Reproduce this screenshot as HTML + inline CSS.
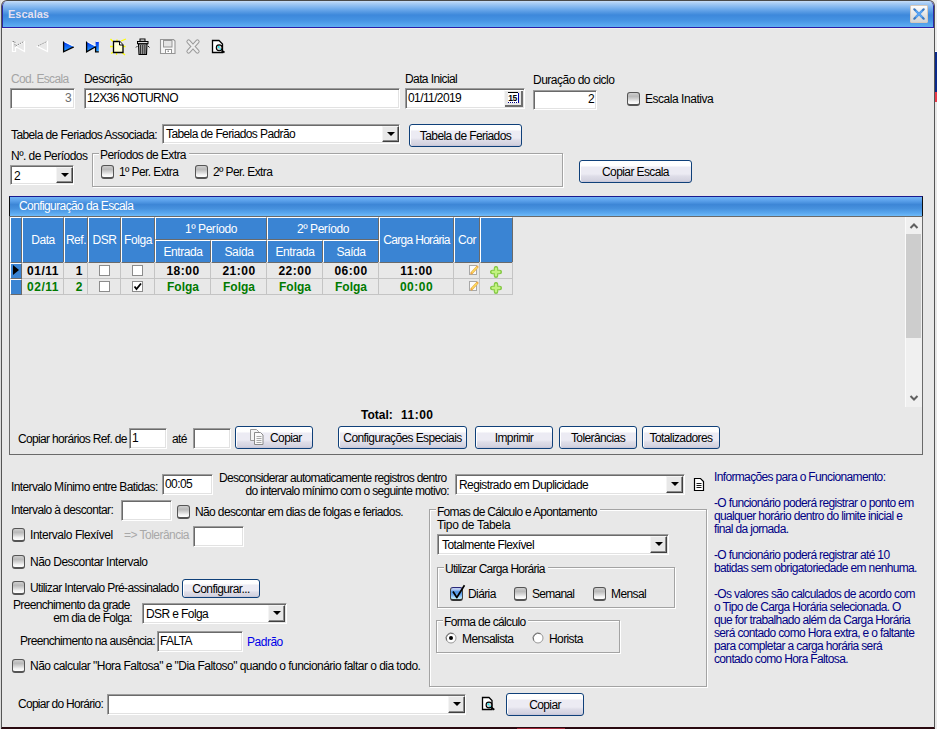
<!DOCTYPE html>
<html><head><meta charset="utf-8">
<style>
*{box-sizing:border-box}
html,body{margin:0;padding:0;width:937px;height:729px;overflow:hidden;background:#e8e8e8;position:relative}
body{font-family:"Liberation Sans",sans-serif;font-size:11px}
.a{position:absolute}
.t{position:absolute;font:12px/13px "Liberation Sans",sans-serif;white-space:nowrap;color:#000;letter-spacing:-0.6px}
.b{font-weight:bold}
.inp{position:absolute;background:#fff;border:1px solid;border-color:#9c9c9c #fff #fff #9c9c9c;box-shadow:inset 1px 1px 0 #6a6a6a,inset -1px -1px 0 #e2e2e2}
.btn{position:absolute;padding-top:1px;border:1px solid #0f4079;border-radius:3px;background:linear-gradient(#ffffff 0,#fefefe 22%,#ecebf3 30%,#ecebf3 62%,#dedde8 72%,#d4d3e0 92%,#c3c2d6 100%);box-shadow:inset 1px 0 0 #fff;font:12px/21px "Liberation Sans",sans-serif;text-align:center;color:#000;letter-spacing:-0.6px;white-space:nowrap}
.chk{position:absolute;width:13px;height:14px;border:1px solid #555;border-bottom-width:2px;border-radius:3px;background:linear-gradient(#cfcfcf 0,#b9b9b9 30%,#d4d4d4 55%,#f2f2f2 78%,#fff 100%)}
.gb{position:absolute;border:1px solid #a3a3a3;box-shadow:1px 1px 0 #fff,inset 1px 1px 0 #fff}
.cbtn{position:absolute;background:#e8e8e8;border:1px solid;border-color:#f4f4f4 #404040 #404040 #f4f4f4;box-shadow:inset -1px -1px 0 #8a8a8a}
.cbtn:after{content:"";position:absolute;left:4px;top:5px;border-left:4px solid transparent;border-right:4px solid transparent;border-top:4px solid #000}
.hc{position:absolute;background:#3a84d3;border-left:1px solid #fff;border-top:1px solid #fff;border-right:1px solid #6a6a6a;border-bottom:1px solid #6a6a6a}
.ht{color:#fff;text-align:center;letter-spacing:-0.45px}
.gck{width:11px;height:11px;background:#fff;border:1px solid #8c8c8c}
.gd{font-size:12px;letter-spacing:0.5px}
</style></head><body>
<!-- outer window frame -->
<div class="a" style="left:0;top:0;width:1px;height:729px;background:#dcdcdc"></div>
<div class="a" style="left:935px;top:0;width:2px;height:51px;background:#ececec"></div>
<div class="a" style="left:935px;top:51px;width:2px;height:1px;background:#fff"></div>
<div class="a" style="left:935px;top:52px;width:2px;height:40px;background:#0a2a8a"></div>
<div class="a" style="left:935px;top:92px;width:2px;height:10px;background:#e83a4a"></div>
<div class="a" style="left:935px;top:102px;width:2px;height:627px;background:#e8e8e8"></div>

<div class="a" style="left:1px;top:0;width:934px;height:729px;border:1px solid #555;border-top-color:#4a4a4a;border-bottom:2px solid #2a0a10;border-radius:6px 6px 0 0;background:#e8e8e8;overflow:hidden">
  <div class="a" style="left:0;top:0;width:932px;height:27px;background:linear-gradient(#c8def8 0,#a9cdf5 8%,#6eaaeb 30%,#3d88db 52%,#4592e2 70%,#58a8ef 90%,#64b2f4 100%);border-left:1px solid #2a2aa8;border-right:1px solid #2a2aa8;border-radius:5px 5px 0 0"></div>
  <div class="a" style="left:0;top:26px;width:932px;height:1px;background:#2a1ea8"></div>
  <div class="a" style="left:0;top:27px;width:932px;height:1px;background:#f2f2ec"></div>
</div>
<div class="t b" style="left:8px;top:8px;color:#e4e0f0;letter-spacing:0;font-size:11px">Escalas</div>
<!-- close button -->
<div class="a" style="left:910px;top:5px;width:18px;height:18px;border:1px solid #d6c9bc;border-radius:1px;background:linear-gradient(#fdfdfd,#e2e2e2 60%,#d4d4d4)"></div>
<svg class="a" style="left:910px;top:5px" width="18" height="18" viewBox="0 0 18 18"><path d="M4.3 4.3L13.7 13.7M13.7 4.3L4.3 13.7" stroke="#3a78c0" stroke-width="2.2" stroke-linecap="round"/><path d="M5.6 5.6L12.4 12.4M12.4 5.6L5.6 12.4" stroke="#5aa4f4" stroke-width="2"/></svg>

<!-- BODY CONTENT -->

<!-- TOOLBAR -->
<svg class="a" style="left:0;top:30px" width="240" height="30" viewBox="0 30 240 30">
 <!-- first disabled -->
 <path d="M12.5 41.5h3v10h-3z M15.5 46.5L24.5 41.5V51.5Z" fill="none" stroke="#fff" stroke-width="1.2"/>
 <path d="M12.5 41.5h2.5v5 M15.5 46L24 41.5" fill="none" stroke="#8a8a8a" stroke-width="1" stroke-dasharray="1.6 0.8"/>
 <!-- prev disabled -->
 <path d="M37.5 46.5L47.5 41.5V51.5Z" fill="none" stroke="#fff" stroke-width="1.2"/>
 <path d="M38 46L47 41.5" fill="none" stroke="#8a8a8a" stroke-width="1" stroke-dasharray="1.6 0.8"/>
 <defs><linearGradient id="bl" x1="0" y1="0" x2="0" y2="1"><stop offset="0" stop-color="#0030f0"/><stop offset="1" stop-color="#28a8ff"/></linearGradient></defs>
 <!-- next -->
 <path d="M63.5 41.8L73.8 46.8L63.5 51.8Z" fill="url(#bl)"/>
 <path d="M63.6 41.5V51.8L73.8 46.8" fill="none" stroke="#000" stroke-width="1.3"/>
 <path d="M64.2 41.6L73.6 46.2" stroke="#fff" stroke-width="0.9"/>
 <!-- last -->
 <path d="M86.5 41.8L95.6 46.8L86.5 51.8Z" fill="url(#bl)"/>
 <rect x="95.6" y="41.6" width="3.2" height="10" fill="url(#bl)"/>
 <path d="M86.6 41.5V51.8L95.6 46.8V51.8H98.8" fill="none" stroke="#000" stroke-width="1.3"/>
 <path d="M87.2 41.6L95.5 45.8M95.8 41.4H98.8" stroke="#fff" stroke-width="0.9"/>
 <!-- new -->
 <g stroke="#ffff00" stroke-width="1.3">
  <path d="M110.5 39L113 41.5 M121 41L126 39 M110 46.5h3 M122 46.5h3.5 M111 53.5l2.5-1.5 M116.5 53v2 M122 52.5l3 2.5 M117 39.5v1.5"/>
 </g>
 <path d="M113.5 41.5h6l3.5 3.5v7.5h-9.5z" fill="#fefed6" stroke="#000" stroke-width="1.3"/>
 <path d="M119.5 41.5v3.5h3.5" fill="#fff" stroke="#000" stroke-width="1"/>
 <!-- trash -->
 <rect x="140" y="39" width="5" height="2.2" fill="#fff" stroke="#000" stroke-width="1"/>
 <rect x="137.5" y="41.5" width="10.5" height="2.2" fill="#ddd" stroke="#000" stroke-width="1"/>
 <path d="M138.5 44h8.5l-0.5 10.5h-7.5z" fill="#bbb" stroke="#000" stroke-width="1.1"/>
 <path d="M140.7 45v9M142.8 45v9M144.9 45v9" stroke="#000" stroke-width="0.9"/>
 <path d="M136 47.5l1.5-1.5M149.5 47.5l-1.5-1.5" stroke="#000" stroke-width="0.9"/>
 <!-- save disabled -->
 <path d="M160.5 39.5h13l1.5 1.5v12.5h-14.5z" fill="#f6f6f6" stroke="#959595" stroke-width="1.1"/>
 <rect x="163.5" y="40.5" width="8.5" height="6.5" fill="#e4e4e4" stroke="#959595" stroke-width="1"/>
 <rect x="165.5" y="49.5" width="6" height="4" fill="#fff" stroke="#959595" stroke-width="1"/>
 <rect x="167.5" y="50.5" width="1.5" height="1.5" fill="#959595"/>
 <!-- X disabled -->
 <path d="M188.5 41.5L197.5 51.5M197.5 41.5L188.5 51.5" stroke="#9a9a9a" stroke-width="4.2" stroke-linecap="round"/><path d="M188.5 41.5L197.5 51.5M197.5 41.5L188.5 51.5" stroke="#ededed" stroke-width="2.3" stroke-linecap="round"/>
 <!-- preview -->
 <path d="M212.5 40.5h6.5l3.5 3.5v8.5h-10z" fill="#fff" stroke="#000" stroke-width="1.3"/>
 <circle cx="219.2" cy="47.8" r="2.9" fill="#d8d0d0" stroke="#000" stroke-width="1.1"/>
 <circle cx="218.6" cy="47" r="1" fill="#10f0f8"/><circle cx="220.2" cy="49" r="0.8" fill="#10f0f8"/>
 <path d="M221.5 50.5l3 2" stroke="#000" stroke-width="1.8"/>
</svg>

<!-- ROW 1 -->
<div class="t" style="left:11px;top:73px;color:#a4a4a4;letter-spacing:-0.655px">Cod. Escala</div>
<div class="t" style="left:84px;top:73px">Descrição</div>
<div class="t" style="left:405px;top:73px">Data Inicial</div>
<div class="t" style="left:533px;top:74px;letter-spacing:-0.499px">Duração do ciclo</div>
<div class="inp" style="left:10px;top:88px;width:65px;height:21px"></div>
<div class="t" style="left:10px;top:92px;width:61px;text-align:right;color:#6d6d6d">3</div>
<div class="inp" style="left:84px;top:88px;width:316px;height:21px"></div>
<div class="t" style="left:87px;top:92px">12X36 NOTURNO</div>
<div class="inp" style="left:405px;top:88px;width:120px;height:21px"></div>
<div class="t" style="left:408px;top:92px">01/11/2019</div>
<div class="a" style="left:504px;top:90px;width:19px;height:17px;background:#e8e8e8;border-top:1px solid #fff;border-left:1px solid #f4f4f4;box-shadow:inset -2px -2px 0 #6e6e6e"></div>
<svg class="a" style="left:506px;top:91px" width="16" height="14"><rect x="2" y="2" width="10" height="10" fill="#fff"/><path d="M2 1.5h10" stroke="#000" stroke-width="1"/><path d="M12.5 2v10" stroke="#0000a8" stroke-width="1"/><path d="M2 11.5h10.5" stroke="#000080" stroke-width="1" stroke-dasharray="1 1"/><text x="2.3" y="10" font-family="Liberation Sans" font-weight="bold" font-size="8.5" letter-spacing="-0.4" fill="#000">15</text></svg>
<div class="inp" style="left:533px;top:90px;width:64px;height:20px"></div>
<div class="t" style="left:533px;top:93px;width:61px;text-align:right">2</div>
<div class="chk" style="left:627px;top:92px"></div>
<div class="t" style="left:645px;top:93px;letter-spacing:-0.465px">Escala Inativa</div>

<!-- ROW 2 -->
<div class="t" style="left:11px;top:129px">Tabela de Feriados Associada:</div>
<div class="inp" style="left:162px;top:124px;width:238px;height:20px"></div>
<div class="t" style="left:166px;top:128px">Tabela de Feriados Padrão</div>
<div class="cbtn" style="left:382px;top:126px;width:17px;height:16px"></div>
<div class="btn" style="left:409px;top:124px;width:113px;height:23px">Tabela de Feriados</div>

<!-- ROW 3 -->
<div class="t" style="left:11px;top:150px;letter-spacing:-0.536px">Nº. de Períodos</div>
<div class="inp" style="left:10px;top:165px;width:64px;height:20px"></div>
<div class="t" style="left:14px;top:170px">2</div>
<div class="cbtn" style="left:56px;top:167px;width:17px;height:16px"></div>
<div class="gb" style="left:92px;top:153px;width:471px;height:34px"></div>
<div class="t" style="left:99px;top:149px;background:#e8e8e8;padding:0 3px 0 1px">Períodos de Extra</div>
<div class="chk" style="left:101px;top:165px"></div>
<div class="t" style="left:119px;top:166px">1º Per. Extra</div>
<div class="chk" style="left:195px;top:165px"></div>
<div class="t" style="left:213px;top:166px">2º Per. Extra</div>
<div class="btn" style="left:579px;top:160px;width:113px;height:23px">Copiar Escala</div>


<!-- PANEL -->
<div class="a" style="left:9px;top:196px;width:914px;height:20px;border-top:1px solid #1a1a90;border-left:1px solid #101010;border-right:1px solid #101010;background:linear-gradient(#72b4f4 0,#5aa0ea 20%,#3d86d6 40%,#4690dd 60%,#5aa8ef 85%,#6fbaf8 100%)"></div>
<div class="t" style="left:19px;top:200px;color:#fff">Configuração da Escala</div>
<div class="a" style="left:9px;top:216px;width:914px;height:239px;border:1px solid #6a6a6a;border-top-color:#6a6a6a"></div>
<div class="hc" style="left:10px;top:217px;width:12px;height:46px"></div>
<div class="hc" style="left:22px;top:217px;width:42px;height:46px"></div><div class="t ht" style="left:22px;top:234px;width:42px">Data</div>
<div class="hc" style="left:64px;top:217px;width:24px;height:46px"></div><div class="t ht" style="left:64px;top:234px;width:24px">Ref.</div>
<div class="hc" style="left:88px;top:217px;width:33px;height:46px"></div><div class="t ht" style="left:88px;top:234px;width:33px">DSR</div>
<div class="hc" style="left:121px;top:217px;width:34px;height:46px"></div><div class="t ht" style="left:121px;top:234px;width:34px">Folga</div>
<div class="hc" style="left:155px;top:217px;width:112px;height:23px"></div><div class="t ht" style="left:155px;top:223px;width:112px">1º Período</div>
<div class="hc" style="left:155px;top:240px;width:56px;height:23px"></div><div class="t ht" style="left:155px;top:246px;width:56px">Entrada</div>
<div class="hc" style="left:211px;top:240px;width:56px;height:23px"></div><div class="t ht" style="left:211px;top:246px;width:56px">Saída</div>
<div class="hc" style="left:267px;top:217px;width:112px;height:23px"></div><div class="t ht" style="left:267px;top:223px;width:112px">2º Período</div>
<div class="hc" style="left:267px;top:240px;width:56px;height:23px"></div><div class="t ht" style="left:267px;top:246px;width:56px">Entrada</div>
<div class="hc" style="left:323px;top:240px;width:56px;height:23px"></div><div class="t ht" style="left:323px;top:246px;width:56px">Saída</div>
<div class="hc" style="left:379px;top:217px;width:75px;height:46px"></div><div class="t ht" style="left:379px;top:234px;width:75px;letter-spacing:-0.7px">Carga Horária</div>
<div class="hc" style="left:454px;top:217px;width:26px;height:46px"></div><div class="t ht" style="left:454px;top:234px;width:26px">Cor</div>
<div class="hc" style="left:480px;top:217px;width:33px;height:46px"></div>
<div class="a" style="left:22px;top:262px;width:491px;height:17px;border-bottom:1px solid #c4c4c4"></div>
<div class="a" style="left:10px;top:263px;width:12px;height:16px;background:#3a84d3;border-left:1px solid #fff;border-top:1px solid #fff;border-right:1px solid #6a6a6a;border-bottom:1px solid #6a6a6a"></div>
<div class="a" style="left:63px;top:262px;width:1px;height:17px;background:#c4c4c4"></div>
<div class="a" style="left:87px;top:262px;width:1px;height:17px;background:#c4c4c4"></div>
<div class="a" style="left:120px;top:262px;width:1px;height:17px;background:#c4c4c4"></div>
<div class="a" style="left:154px;top:262px;width:1px;height:17px;background:#c4c4c4"></div>
<div class="a" style="left:210px;top:262px;width:1px;height:17px;background:#c4c4c4"></div>
<div class="a" style="left:266px;top:262px;width:1px;height:17px;background:#c4c4c4"></div>
<div class="a" style="left:322px;top:262px;width:1px;height:17px;background:#c4c4c4"></div>
<div class="a" style="left:378px;top:262px;width:1px;height:17px;background:#c4c4c4"></div>
<div class="a" style="left:453px;top:262px;width:1px;height:17px;background:#c4c4c4"></div>
<div class="a" style="left:479px;top:262px;width:1px;height:17px;background:#c4c4c4"></div>
<div class="a" style="left:512px;top:262px;width:1px;height:17px;background:#c4c4c4"></div>
<div class="t b gd" style="left:22px;top:265px;width:41px;color:#000;text-align:center;padding-left:1px">01/11</div>
<div class="t b gd" style="left:64px;top:265px;width:23px;color:#000;text-align:right;padding-right:4px">1</div>
<div class="a gck" style="left:99px;top:265px"></div>
<div class="a gck" style="left:132px;top:265px"></div>
<div class="t b gd" style="left:155px;top:265px;width:56px;text-align:center;color:#000">18:00</div>
<div class="t b gd" style="left:211px;top:265px;width:56px;text-align:center;color:#000">21:00</div>
<div class="t b gd" style="left:267px;top:265px;width:56px;text-align:center;color:#000">22:00</div>
<div class="t b gd" style="left:323px;top:265px;width:56px;text-align:center;color:#000">06:00</div>
<div class="t b gd" style="left:379px;top:265px;width:75px;text-align:center;color:#000">11:00</div>
<svg class="a" style="left:469px;top:265px" width="10" height="11"><rect x="0.5" y="0.5" width="7" height="9" fill="#fbfbfb" stroke="#a8a8a8"/><path d="M2.6 8.2L8.2 2" stroke="#eba848" stroke-width="2.6" stroke-linecap="round"/><path d="M3 7.6L8 2.2" stroke="#fade60" stroke-width="1.3"/></svg>
<svg class="a" style="left:490px;top:266px" width="13" height="13"><path d="M6 2.2V9.8M2.2 6H9.8" stroke="#84c844" stroke-width="4.5" stroke-linecap="round"/><path d="M6 2.6V9.4M2.6 6H9.4" stroke="#c2f280" stroke-width="2.3" stroke-linecap="round"/></svg>
<div class="a" style="left:22px;top:278px;width:491px;height:17px;border-bottom:1px solid #c4c4c4"></div>
<div class="a" style="left:10px;top:279px;width:12px;height:16px;background:#3a84d3;border-left:1px solid #fff;border-top:1px solid #fff;border-right:1px solid #6a6a6a;border-bottom:1px solid #6a6a6a"></div>
<div class="a" style="left:63px;top:278px;width:1px;height:17px;background:#c4c4c4"></div>
<div class="a" style="left:87px;top:278px;width:1px;height:17px;background:#c4c4c4"></div>
<div class="a" style="left:120px;top:278px;width:1px;height:17px;background:#c4c4c4"></div>
<div class="a" style="left:154px;top:278px;width:1px;height:17px;background:#c4c4c4"></div>
<div class="a" style="left:210px;top:278px;width:1px;height:17px;background:#c4c4c4"></div>
<div class="a" style="left:266px;top:278px;width:1px;height:17px;background:#c4c4c4"></div>
<div class="a" style="left:322px;top:278px;width:1px;height:17px;background:#c4c4c4"></div>
<div class="a" style="left:378px;top:278px;width:1px;height:17px;background:#c4c4c4"></div>
<div class="a" style="left:453px;top:278px;width:1px;height:17px;background:#c4c4c4"></div>
<div class="a" style="left:479px;top:278px;width:1px;height:17px;background:#c4c4c4"></div>
<div class="a" style="left:512px;top:278px;width:1px;height:17px;background:#c4c4c4"></div>
<div class="t b gd" style="left:22px;top:281px;width:41px;color:#007a00;text-align:center;padding-left:1px">02/11</div>
<div class="t b gd" style="left:64px;top:281px;width:23px;color:#007a00;text-align:right;padding-right:4px">2</div>
<div class="a gck" style="left:99px;top:281px"></div>
<div class="a gck" style="left:132px;top:281px"><svg width="9" height="9" style="position:absolute;left:0;top:0"><path d="M1.5 4.5L3.5 7L8 1.5" fill="none" stroke="#000" stroke-width="1.8"/></svg></div>
<div class="t b gd" style="left:155px;top:281px;width:56px;text-align:center;color:#007a00;letter-spacing:0">Folga</div>
<div class="t b gd" style="left:211px;top:281px;width:56px;text-align:center;color:#007a00;letter-spacing:0">Folga</div>
<div class="t b gd" style="left:267px;top:281px;width:56px;text-align:center;color:#007a00;letter-spacing:0">Folga</div>
<div class="t b gd" style="left:323px;top:281px;width:56px;text-align:center;color:#007a00;letter-spacing:0">Folga</div>
<div class="t b gd" style="left:379px;top:281px;width:75px;text-align:center;color:#007a00">00:00</div>
<svg class="a" style="left:469px;top:281px" width="10" height="11"><rect x="0.5" y="0.5" width="7" height="9" fill="#fbfbfb" stroke="#a8a8a8"/><path d="M2.6 8.2L8.2 2" stroke="#eba848" stroke-width="2.6" stroke-linecap="round"/><path d="M3 7.6L8 2.2" stroke="#fade60" stroke-width="1.3"/></svg>
<svg class="a" style="left:490px;top:282px" width="13" height="13"><path d="M6 2.2V9.8M2.2 6H9.8" stroke="#84c844" stroke-width="4.5" stroke-linecap="round"/><path d="M6 2.6V9.4M2.6 6H9.4" stroke="#c2f280" stroke-width="2.3" stroke-linecap="round"/></svg>
<svg class="a" style="left:12px;top:264px" width="8" height="12"><path d="M1 1L7 6L1 11Z" fill="#000"/></svg>
<div class="a" style="left:905px;top:217px;width:17px;height:190px;background:#f0f0f0;border-left:1px solid #fafafa"></div>
<div class="a" style="left:906px;top:234px;width:15px;height:104px;background:#cdcdcd"></div>
<svg class="a" style="left:909px;top:222px" width="10" height="8"><path d="M1.5 6L5 2.5L8.5 6" fill="none" stroke="#606060" stroke-width="2"/></svg>
<svg class="a" style="left:909px;top:394px" width="10" height="8"><path d="M1.5 2L5 5.5L8.5 2" fill="none" stroke="#606060" stroke-width="2"/></svg>
<div class="t b gd" style="left:361px;top:409px;letter-spacing:0">Total:</div><div class="t b gd" style="left:401px;top:409px">11:00</div>
<div class="t" style="left:18px;top:433px;letter-spacing:-0.664px">Copiar horários Ref. de</div>
<div class="inp" style="left:129px;top:428px;width:38px;height:21px"></div>
<div class="t" style="left:132px;top:432px">1</div>
<div class="t" style="left:172px;top:433px">até</div>
<div class="inp" style="left:193px;top:428px;width:38px;height:21px"></div>
<div class="btn" style="left:235px;top:426px;width:78px;height:23px;text-align:left;padding-left:34px">Copiar</div>
<svg class="a" style="left:249px;top:428px" width="16" height="18"><path d="M1.5 1.5h6l2 2v9h-8z" fill="#f4f4f4" stroke="#9a9a9a"/><path d="M5.5 4.5h6l2.5 2.5v9.5h-8.5z" fill="#fafafa" stroke="#8a8a8a"/><path d="M7.5 8.5h5M7.5 10.5h5M7.5 12.5h5M7.5 14.5h5" stroke="#a8a8a8"/></svg>
<div class="btn" style="left:338px;top:426px;width:129px;height:23px">Configurações Especiais</div>
<div class="btn" style="left:475px;top:426px;width:78px;height:23px">Imprimir</div>
<div class="btn" style="left:559px;top:426px;width:78px;height:23px">Tolerâncias</div>
<div class="btn" style="left:642px;top:426px;width:78px;height:23px">Totalizadores</div>


<!-- BOTTOM -->
<div class="t" style="left:11px;top:481px;letter-spacing:-0.625px">Intervalo Mínimo entre Batidas:</div>
<div class="inp" style="left:162px;top:474px;width:51px;height:21px"></div>
<div class="t" style="left:165px;top:478px">00:05</div>
<div class="t" style="left:219px;top:472px;letter-spacing:-0.695px">Desconsiderar automaticamente registros dentro</div>
<div class="t" style="left:200px;top:485px;width:249px;text-align:right;letter-spacing:-0.665px">do intervalo mínimo com o seguinte motivo:</div>
<div class="inp" style="left:455px;top:474px;width:230px;height:21px"></div>
<div class="t" style="left:459px;top:479px">Registrado em Duplicidade</div>
<div class="cbtn" style="left:666px;top:476px;width:17px;height:17px"></div>
<svg class="a" style="left:693px;top:477px" width="12" height="15"><path d="M1.5 1.5h6l3 3v9h-9z" fill="#fff" stroke="#000" stroke-width="1.2"/><path d="M3.5 6.5h5M3.5 8.5h5M3.5 10.5h5" stroke="#000" stroke-width="0.9"/></svg>
<div class="t" style="left:11px;top:504px">Intervalo à descontar:</div>
<div class="inp" style="left:121px;top:500px;width:51px;height:21px"></div>
<div class="chk" style="left:177px;top:505px"></div>
<div class="t" style="left:195px;top:506px;letter-spacing:-0.624px">Não descontar em dias de folgas e feriados.</div>
<div class="chk" style="left:12px;top:528px"></div>
<div class="t" style="left:30px;top:529px;letter-spacing:-0.445px">Intervalo Flexível</div>
<div class="t" style="left:124px;top:529px;color:#a8a8a8;letter-spacing:-0.525px">=&gt; Tolerância</div>
<div class="inp" style="left:193px;top:526px;width:51px;height:21px"></div>
<div class="chk" style="left:12px;top:555px"></div>
<div class="t" style="left:30px;top:556px;letter-spacing:-0.518px">Não Descontar Intervalo</div>
<div class="chk" style="left:12px;top:581px"></div>
<div class="t" style="left:30px;top:582px;letter-spacing:-0.634px">Utilizar Intervalo Pré-assinalado</div>
<div class="btn" style="left:182px;top:579px;width:78px;height:19px;line-height:17px">Configurar...</div>
<div class="t" style="left:13px;top:599px;letter-spacing:-0.665px">Preenchimento da grade</div>
<div class="t" style="left:30px;top:612px;width:102px;text-align:right;letter-spacing:-0.669px">em dia de Folga:</div>
<div class="inp" style="left:142px;top:603px;width:145px;height:21px"></div>
<div class="t" style="left:146px;top:608px">DSR e Folga</div>
<div class="cbtn" style="left:268px;top:605px;width:17px;height:17px"></div>
<div class="t" style="left:20px;top:635px;letter-spacing:-0.658px">Preenchimento na ausência:</div>
<div class="inp" style="left:157px;top:631px;width:86px;height:21px"></div>
<div class="t" style="left:160px;top:635px">FALTA</div>
<div class="t" style="left:247px;top:636px;color:#0000e8;letter-spacing:-0.485px">Padrão</div>
<div class="chk" style="left:12px;top:659px"></div>
<div class="t" style="left:30px;top:660px;letter-spacing:-0.533px">Não calcular "Hora Faltosa" e "Dia Faltoso" quando o funcionário faltar o dia todo.</div>
<div class="t" style="left:18px;top:698px;letter-spacing:-0.725px">Copiar do Horário:</div>
<div class="inp" style="left:107px;top:694px;width:359px;height:21px"></div>
<div class="cbtn" style="left:448px;top:696px;width:17px;height:17px"></div>
<svg class="a" style="left:481px;top:696px" width="16" height="16"><path d="M1.5 1.5h6.5l3 3v9h-9.5z" fill="#fff" stroke="#000" stroke-width="1.3"/><circle cx="8" cy="9" r="2.9" fill="#d8d0d0" stroke="#000" stroke-width="1.1"/><circle cx="7.4" cy="8.2" r="1" fill="#10f0f8"/><circle cx="9" cy="10.2" r="0.8" fill="#10f0f8"/><path d="M10.3 11.5l3 2.2" stroke="#000" stroke-width="1.8"/></svg>
<div class="btn" style="left:506px;top:693px;width:78px;height:23px">Copiar</div>
<div class="gb" style="left:429px;top:509px;width:278px;height:178px"></div>
<div class="t" style="left:436px;top:506px;background:#e8e8e8;padding:0 3px 0 1px;letter-spacing:-0.706px">Fomas de Cálculo e Apontamento</div>
<div class="t" style="left:437px;top:519px;letter-spacing:-0.341px">Tipo de Tabela</div>
<div class="inp" style="left:437px;top:534px;width:232px;height:21px"></div>
<div class="t" style="left:442px;top:539px">Totalmente Flexível</div>
<div class="cbtn" style="left:650px;top:536px;width:17px;height:17px"></div>
<div class="gb" style="left:437px;top:567px;width:238px;height:41px"></div>
<div class="t" style="left:444px;top:563px;background:#e8e8e8;padding:0 3px 0 1px;letter-spacing:-0.708px">Utilizar Carga Horária</div>
<div class="chk" style="left:450px;top:587px;border-color:#2a2a7a #444 #333 #444;background:linear-gradient(#c4cdf2 0,#b0c8f0 15%,#4a92e2 35%,#6aaaf0 60%,#a8d8fa 85%,#c8f4f8 100%)"></div><svg class="a" style="left:450px;top:583px" width="18" height="18"><path d="M3 8.5L6.8 14.5L14.5 2.3" fill="none" stroke="#000" stroke-width="1.7" stroke-linejoin="round"/></svg>
<div class="t" style="left:468px;top:588px">Diária</div>
<div class="chk" style="left:514px;top:587px"></div>
<div class="t" style="left:532px;top:588px;letter-spacing:-0.739px">Semanal</div>
<div class="chk" style="left:593px;top:587px"></div>
<div class="t" style="left:611px;top:588px">Mensal</div>
<div class="gb" style="left:436px;top:620px;width:184px;height:33px"></div>
<div class="t" style="left:443px;top:616px;background:#e8e8e8;padding:0 3px 0 1px;letter-spacing:-0.660px">Forma de cálculo</div>
<svg class="a" style="left:445px;top:632px" width="13" height="13"><circle cx="6" cy="6" r="5" fill="#fff" stroke="#999"/><path d="M1.8 8.5A5 5 0 0 1 8.5 1.8" fill="none" stroke="#707070" stroke-width="1"/><circle cx="6" cy="6" r="2" fill="#000"/></svg>
<div class="t" style="left:462px;top:633px">Mensalista</div>
<svg class="a" style="left:532px;top:632px" width="13" height="13"><circle cx="6" cy="6" r="5" fill="#fff" stroke="#999"/><path d="M1.8 8.5A5 5 0 0 1 8.5 1.8" fill="none" stroke="#707070" stroke-width="1"/></svg>
<div class="t" style="left:549px;top:633px">Horista</div>
<div class="t" style="left:714px;top:471px;color:#000085;line-height:13px;letter-spacing:-0.65px">Informações para o Funcionamento:<br>&nbsp;<br>-O funcionário poderá registrar o ponto em<br>qualquer horário dentro do limite inicial e<br>final da jornada.<br>&nbsp;<br>-O funcionário poderá registrar até 10<br>batidas sem obrigatoriedade em nenhuma.<br>&nbsp;<br>-Os valores são calculados de acordo com<br>o Tipo de Carga Horária selecionada. O<br>que for trabalhado além da Carga Horária<br>será contado como Hora extra, e o faltante<br>para completar a carga horária será<br>contado como Hora Faltosa.</div>

<div class="a" style="left:517px;top:728px;width:48px;height:1px;background:#a02838"></div>
<div id="content"></div>
</body></html>
